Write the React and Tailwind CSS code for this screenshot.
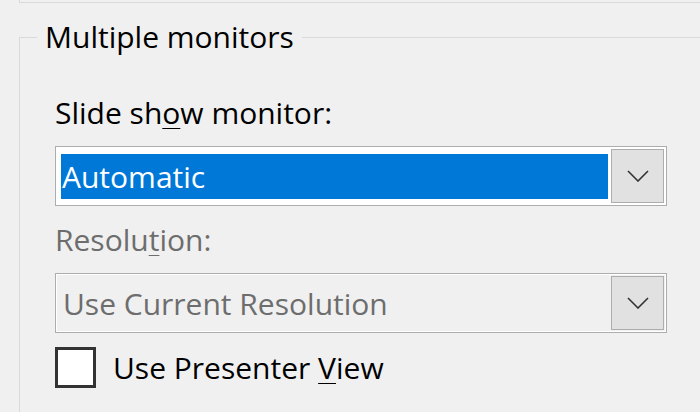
function Chevron() {
  return (
    <svg width="22" height="12" viewBox="0 0 22 12" fill="none">
      <polyline points="1,1 11,11 21,1" stroke="#333333" strokeWidth="1.6" />
    </svg>
  );
}

function DropButton() {
  return (
    <span className="flex h-[54px] w-[53px] items-center justify-center border border-[#adadad] bg-[#e1e1e1]">
      <Chevron />
    </span>
  );
}

export default function App() {
  return (
    <main className="h-[412px] w-[700px] overflow-hidden bg-[#f0f0f0] font-['Open_Sans',sans-serif] text-[30px] text-black">
      <div className="ml-[19px] h-[3px] border-b border-l border-[#dadada]" />

      <fieldset className="ml-[19px] mt-[16px] h-[400px] border-l border-t border-[#dadada]">
        <legend className="ml-[17px] px-2 leading-[36px]">Multiple monitors</legend>

        <div className="pl-[35px]">
          <p className="mt-[40px] leading-[36px]">
            Slide sh<span className="underline decoration-1 underline-offset-[4px]">o</span>w monitor:
          </p>
          <div className="mt-[15px] flex h-[60px] w-[612px] items-center border border-[#adadad] bg-white">
            <span className="ml-[5px] mr-[3px] flex h-[45px] flex-1 items-center bg-[#0078d7] pl-[1px] text-white">Automatic</span>
            <DropButton />
            <span className="w-[2px]" />
          </div>

          <p className="mt-[16px] leading-[36px] text-[#6d6d6d]">
            Resolu<span className="underline decoration-1 underline-offset-[4px]">t</span>ion:
          </p>
          <div className="mt-[15px] flex h-[60px] w-[612px] items-center border border-[#adadad]">
            <div className="flex h-full flex-1 items-center border border-white">
              <span className="flex flex-1 items-center pl-[6px] text-[#6d6d6d]">Use Current Resolution</span>
              <DropButton />
              <span className="w-[1px]" />
            </div>
          </div>

          <label className="mt-[14px] flex items-center gap-[17px]">
            <span className="h-[41px] w-[41px] border-[3px] border-[#333333] bg-white" />
            <span className="leading-[36px]">
              Use Presenter <span className="underline decoration-1 underline-offset-[4px]">V</span>iew
            </span>
          </label>
        </div>
      </fieldset>
    </main>
  );
}
